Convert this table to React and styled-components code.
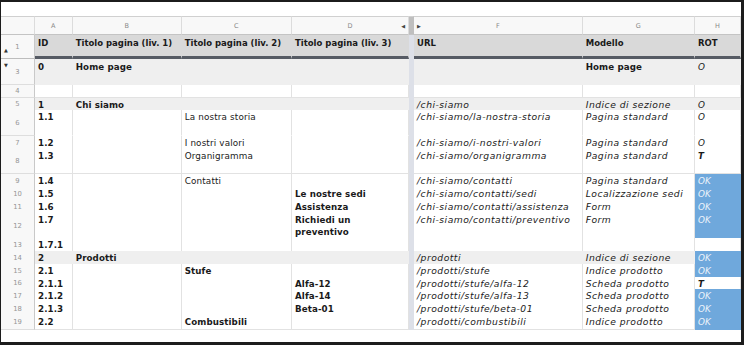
import React from 'react';
import styled, {createGlobalStyle} from 'styled-components';

const COLS = '34px 37.7px 109px 110.3px 117px 5px 168.7px 112.3px 46px';
const GRID = '#e2e2e2';
const GRAY = '#efefef';
const BLUE = '#6fa8dc';

const Global = createGlobalStyle`
  body {
    margin: 0;
    background: #fff;
  }
`;

const Frame = styled.div`
  width: 744px;
  height: 345px;
  box-sizing: border-box;
  border: solid #1c1c1c;
  border-width: 2px 3px 3px 1px;
  padding-top: 14px;
  background: #fff;
  overflow: hidden;
  font-family: 'DejaVu Sans', sans-serif;
`;

const Row = styled.div`
  display: grid;
  grid-template-columns: ${COLS};
  height: ${p => p.$h}px;
`;

const ColHead = styled.div`
  box-sizing: border-box;
  display: flex;
  align-items: center;
  justify-content: center;
  position: relative;
  background: ${p => (p.$gap ? '#bfbfbf' : '#f8f8f8')};
  border-top: 1px solid #d0d0d0;
  border-bottom: 1px solid #c4c4c4;
  border-right: 1px solid ${p => (p.$gap ? '#bfbfbf' : '#dcdcdc')};
  color: #8a8a8a;
  font-size: 6.5px;
`;

const Arrow = styled.span`
  position: absolute;
  top: 50%;
  transform: translateY(-50%);
  ${p => (p.$left ? 'right: 3px;' : 'left: 3px;')}
  font-size: 5px;
  color: #444;
`;

const RowHead = styled.div`
  box-sizing: border-box;
  position: relative;
  display: flex;
  align-items: center;
  justify-content: center;
  background: #f8f8f8;
  border-right: 1px solid #c9c9c9;
  border-bottom: 1px solid ${p => (p.$dark ? '#bdbdbd' : '#dedede')};
  color: #969696;
  font-size: 6.8px;
`;

const Toggle = styled.span`
  position: absolute;
  left: 3px;
  top: ${p => p.$top}px;
  font-size: 5px;
  color: #333;
`;

const Gap = styled.div`
  background: #dde0e8;
`;

const Cell = styled.div`
  box-sizing: border-box;
  padding: ${p => p.$pt || 1}px 3px 0;
  background: ${p => p.$fill || '#fff'};
  border-right: 1px solid ${p => (p.$fill ? 'transparent' : GRID)};
  border-bottom: ${p =>
    p.$head
      ? '3px solid #565b64'
      : `1px solid ${p.$fill || p.$flat ? 'transparent' : GRID}`};
  font-size: ${p => p.$size || 8.5}px;
  letter-spacing: ${p => p.$ls || 0}px;
  line-height: 12.6px;
  font-weight: ${p => (p.$bold ? 700 : 400)};
  font-style: ${p => (p.$it ? 'italic' : 'normal')};
  color: ${p => p.$color || '#1a1a1a'};
  white-space: pre;
`;

const letters = ['A', 'B', 'C', 'D', '', 'F', 'G', 'H'];

const rows = [
  {n: 3, h: 26, fill: GRAY, pt: 2, c: ['0', 'Home page', '', '', '', 'Home page', 'O'], bold: [0, 1, 5], toggle: true},
  {n: 4, h: 12.6, c: ['', '', '', '', '', '', '']},
  {n: 5, h: 12.8, fill: GRAY, c: ['1', 'Chi siamo', '', '', '/chi-siamo', 'Indice di sezione', 'O'], bold: [0, 1]},
  {n: 6, h: 25.6, flat: true, c: ['1.1', '', 'La nostra storia', '', '/chi-siamo/la-nostra-storia', 'Pagina standard', 'O']},
  {n: 7, h: 12.6, c: ['1.2', '', 'I nostri valori', '', '/chi-siamo/i-nostri-valori', 'Pagina standard', 'O']},
  {n: 8, h: 25.6, c: ['1.3', '', 'Organigramma', '', '/chi-siamo/organigramma', 'Pagina standard', 'T']},
  {n: 9, h: 12.8, c: ['1.4', '', 'Contatti', '', '/chi-siamo/contatti', 'Pagina standard', 'OK']},
  {n: 10, h: 12.8, c: ['1.5', '', '', 'Le nostre sedi', '/chi-siamo/contatti/sedi', 'Localizzazione sedi', 'OK']},
  {n: 11, h: 12.8, c: ['1.6', '', '', 'Assistenza', '/chi-siamo/contatti/assistenza', 'Form', 'OK']},
  {n: 12, h: 25.6, c: ['1.7', '', '', 'Richiedi un\npreventivo', '/chi-siamo/contatti/preventivo', 'Form', 'OK']},
  {n: 13, h: 12.8, c: ['1.7.1', '', '', '', '', '', '']},
  {n: 14, h: 12.8, fill: GRAY, c: ['2', 'Prodotti', '', '', '/prodotti', 'Indice di sezione', 'OK'], bold: [0, 1]},
  {n: 15, h: 12.8, c: ['2.1', '', 'Stufe', '', '/prodotti/stufe', 'Indice prodotto', 'OK'], bold: [2]},
  {n: 16, h: 12.8, flat: true, c: ['2.1.1', '', '', 'Alfa-12', '/prodotti/stufe/alfa-12', 'Scheda prodotto', 'T']},
  {n: 17, h: 12.8, c: ['2.1.2', '', '', 'Alfa-14', '/prodotti/stufe/alfa-13', 'Scheda prodotto', 'OK']},
  {n: 18, h: 12.8, c: ['2.1.3', '', '', 'Beta-01', '/prodotti/stufe/beta-01', 'Scheda prodotto', 'OK']},
  {n: 19, h: 12.8, c: ['2.2', '', 'Combustibili', '', '/prodotti/combustibili', 'Indice prodotto', 'OK'], bold: [2]},
];

const header = ['ID', 'Titolo pagina (liv. 1)', 'Titolo pagina (liv. 2)', 'Titolo pagina (liv. 3)', 'URL', 'Modello', 'ROT'];

function DataCell({row, i, text}) {
  const rot = i === 6;
  const ok = rot && text === 'OK';
  const bold = i === 0 || i === 3 || (row.bold || []).includes(i) || (rot && text === 'T');
  const italic = i >= 4 && !(i === 5 && row.n === 3);
  // DejaVu runs narrower than the sheet's font on plain text, so widen it a bit
  const size = italic && !rot ? 9.2 : bold ? 8.7 : 8.8;
  const ls = italic && !rot ? 0.5 : bold ? 0.1 : 0.15;
  return (
    <Cell
      $fill={ok ? BLUE : row.fill}
      $flat={row.flat}
      $pt={row.pt}
      $bold={bold}
      $it={italic}
      $size={size}
      $ls={ls}
      $color={ok ? '#eef4fb' : undefined}>
      {text}
    </Cell>
  );
}

export default function App() {
  return (
    <>
      <Global />
      <Frame>
        <Row $h={19}>
          <ColHead />
          {letters.map((l, i) => (
            <ColHead key={i} $gap={i === 4}>
              {l}
              {l === 'D' && <Arrow $left>◀</Arrow>}
              {l === 'F' && <Arrow>▶</Arrow>}
            </ColHead>
          ))}
        </Row>
        <Row $h={24}>
          <RowHead $dark>
            1<Toggle $top={12}>▲</Toggle>
          </RowHead>
          {header.slice(0, 4).map(t => (
            <Cell key={t} $fill="#d9d9d9" $head $bold $pt={2}>{t}</Cell>
          ))}
          <Gap />
          {header.slice(4).map(t => (
            <Cell key={t} $fill="#d9d9d9" $head $bold $pt={2}>{t}</Cell>
          ))}
        </Row>
        {rows.map(row => (
          <Row key={row.n} $h={row.h}>
            <RowHead>
              {row.n}
              {row.toggle && <Toggle $top={3}>▼</Toggle>}
            </RowHead>
            {row.c.slice(0, 4).map((t, i) => (
              <DataCell key={i} row={row} i={i} text={t} />
            ))}
            <Gap />
            {row.c.slice(4).map((t, i) => (
              <DataCell key={i + 4} row={row} i={i + 4} text={t} />
            ))}
          </Row>
        ))}
      </Frame>
    </>
  );
}
